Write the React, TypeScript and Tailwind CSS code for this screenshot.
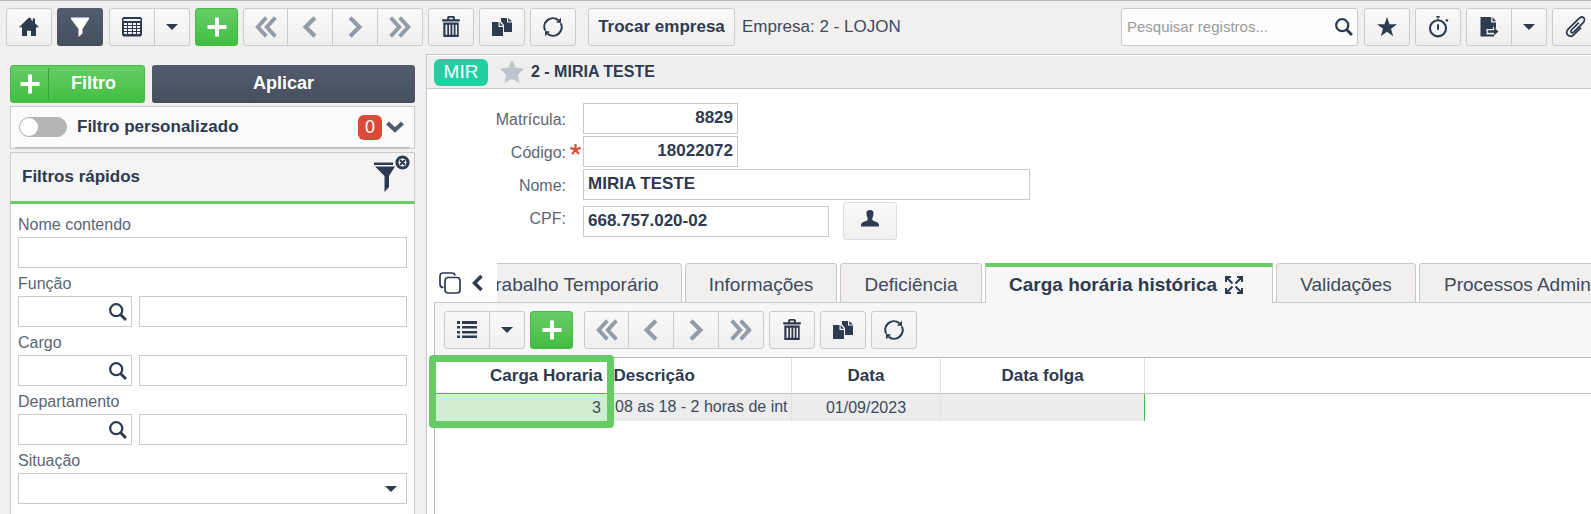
import React from "react";
import { clsx } from "clsx";

type IconProps = { className?: string };

function Icon({ size = 20, children }: { size?: number; children: React.ReactNode }) {
    return (
        <svg width={size} height={size} viewBox="0 0 20 20" fill="currentColor" className="shrink-0" aria-hidden="true">
            {children}
        </svg>
    );
}

const HomeIcon = () => (
    <Icon>
        <path d="M10 .5 0 10.2h3V19h5v-5.2h4V19h5v-8.8h3L16 6.3V1.500h-2.200v2.700L12 2.500V1h-1z" />
    </Icon>
);

const FunnelIcon = () => (
    <Icon>
        <path d="M1 .5h18v1.500L12.500 12v4.500L8.500 20v-8L1 2z" />
    </Icon>
);

const TableIcon = () => (
    <Icon>
        <path fillRule="evenodd" d="M1.500 0h17L20 1.500V18l-1.500 1.500h-17L0 18V1.500zM1.500 2v2h17V2zM2 6v2h3V6zm4 0v2h4V6zm5 0v2h3V6zm4 0v2h3V6zM2 9v2h3V9zm4 0v2h4V9zm5 0v2h3V9zm4 0v2h3V9zM2 12v2h3v-2zm4 0v2h4v-2zm5 0v2h3v-2zm4 0v2h3v-2zM2 15v2h3v-2zm4 0v2h4v-2zm5 0v2h3v-2zm4 0v2h3v-2z" />
    </Icon>
);

const ListIcon = () => (
    <Icon>
        <path d="M0 1h3v3H0zm5 0h15v3H5zM0 6h3v2.500H0zm5 0h15v2.500H5zM0 11h3v2.500H0zm5 0h15v2.500H5zM0 15.500h3V18H0zm5 0h15V18H5z" />
    </Icon>
);

const PlusIcon = () => (
    <Icon>
        <path d="M8 .5h4V8h7.500v4H12v7.500H8V12H.5V8H8z" />
    </Icon>
);

const CaretIcon = () => (
    <svg width="12" height="6" viewBox="0 0 12 6" fill="currentColor" aria-hidden="true">
        <path d="M0 0h12L6 6z" />
    </svg>
);

const FirstIcon = () => (
    <Icon size={22}>
        <path d="m10.300 1.500-7.800 8.500 7.800 8.500M18.500 1.500 10.700 10l7.800 8.500" fill="none" stroke="currentColor" strokeWidth="3.500" />
    </Icon>
);

const LastIcon = () => (
    <Icon size={22}>
        <path d="m1.500 1.500 7.800 8.500-7.800 8.500M9.700 1.500l7.800 8.500-7.800 8.500" fill="none" stroke="currentColor" strokeWidth="3.500" />
    </Icon>
);

const PrevIcon = () => (
    <Icon size={22}>
        <path d="M14.500 1.500 6 10l8.500 8.500" fill="none" stroke="currentColor" strokeWidth="3.800" />
    </Icon>
);

const NextIcon = () => (
    <Icon size={22}>
        <path d="M5.500 1.500 14 10l-8.500 8.500" fill="none" stroke="currentColor" strokeWidth="3.800" />
    </Icon>
);

const TrashIcon = () => (
    <Icon size={22}>
        <path fillRule="evenodd" d="M6.500 3V.8L7.500 0h5l1 .8V3H18v2H2V3zm1.800 0h3.400V1.700H8.300zM3 6h14v13H3zm2 2v9h1.600V8zm3.200 0v9h1.300V8zm3 0v9h1.300V8zm2.900 0v9h1.400V8z" />
    </Icon>
);

const CopyIcon = () => (
    <Icon>
        <path d="M0 5h6.500v5H11v9H0zM7.700 5 11 8.700H7.700zM9 1h6v4.500h5V15h-8V8L9 4.200zm7.200 0L20 4.500h-3.800z" />
    </Icon>
);

const RefreshIcon = () => (
    <Icon>
        <path d="M2.200 13.600A8.600 8.600 0 0 1 15.300 3.100M17.800 6.400A8.600 8.600 0 0 1 4.700 16.900" fill="none" stroke="currentColor" strokeWidth="2.100" />
        <path d="M18 .8v5.200l-5-.6zM2 19.200V14l5 .6z" />
    </Icon>
);

const SearchIcon = () => (
    <Icon size={18}>
        <circle cx="8" cy="8" r="6.700" fill="none" stroke="currentColor" strokeWidth="2.500" />
        <path d="m12.500 12.500 6.300 6.300" stroke="currentColor" strokeWidth="3.200" />
    </Icon>
);

const StarIcon = () => (
    <Icon>
        <path d="m10 0 2.500 7.200H20l-6 4.500 2.200 7.500L10 14.800l-6.200 4.400L6 11.700 0 7.200h7.500z" />
    </Icon>
);

const FavoriteIcon = () => (
    <Icon size={24}>
        <path d="m10 0 3.100 6.300 6.900 1-5 4.900 1.200 6.900-6.200-3.300-6.200 3.300L5 12.200 0 7.300l6.900-1z" />
    </Icon>
);

const StopwatchIcon = () => (
    <Icon size={22}>
        <circle cx="10" cy="11.200" r="7.300" fill="none" stroke="currentColor" strokeWidth="1.900" />
        <path d="M8.500 0h3v1.700h-3zM17 3h2.200v2H17zM9.100 7.500h1.800v5H9.100zM9.500 2h1v2h-1z" />
    </Icon>
);

const ExportIcon = () => (
    <Icon>
        <path d="M1.500 0h10.700v5.500H17v6h-2V9.700l-1-.2V12H7.500v5.500H15v2H1.500zM13.500 0 17 4.300h-3.500z" />
        <path d="M8.800 13.200H15v-2.400l4.500 3.700-4.500 3.700v-2.400H8.800z" />
    </Icon>
);

const ClipIcon = () => (
    <Icon size={22}>
        <path d="M13.500 6 7 12.500c-1.800 1.800.2 3.800 2 2l8.300-8.300C20.800 2.500 16.800-.8 13.500 2.300L4 11.800c-4 4 1.200 9.200 5 5.200l6.500-6.500" fill="none" stroke="currentColor" strokeWidth="1.600" />
    </Icon>
);

const PersonIcon = () => (
    <Icon>
        <path d="M10 1c2.800 0 3.800 1.500 3.500 4-.2 2-.8 3.200-1.200 4.200v1.600c0 1.500 6.700 1.700 6.700 5.200v1.500H1V16c0-3.500 6.700-3.700 6.700-5.200V9.200c-.4-1-1-2.200-1.200-4.200C6.200 2.500 7.200 1 10 1" />
    </Icon>
);

function ClearFilterIcon() {
    return (
        <svg width="36" height="37" viewBox="0 0 36 37" aria-hidden="true">
            <path d="M0 7.500h19v2.500H0zM1 11.500h20L15 21v11l-4.500 5V21z" fill="#2d3a4f" />
            <circle cx="28.500" cy="7.500" r="5.500" fill="#fff" stroke="#2d3a4f" strokeWidth="3.200" />
            <path d="m26 5 5 5m0-5-5 5" stroke="#2d3a4f" strokeWidth="2" />
        </svg>
    );
}

const OverlapIcon = () => (
    <svg width="22" height="22" viewBox="0 0 22 22" fill="none" stroke="currentColor" strokeWidth="1.700" aria-hidden="true">
        <rect x="6" y="5.500" width="15" height="15.500" rx="3" />
        <path d="M4.500 15.500C2 15.500 1 14.500 1 12.500V4c0-2 1-3 3-3h9c2 0 3 1 3 2.500" />
    </svg>
);

const ExpandIcon = () => (
    <svg width="18" height="18" viewBox="0 0 18 18" fill="none" stroke="currentColor" strokeWidth="2" aria-hidden="true">
        <path d="M1 6V1h5M12 1h5v5M17 12v5h-5M6 17H1v-5M1 1l6.500 6.500M17 1l-6.500 6.500M17 17l-6.500-6.500M1 17l6.500-6.500" />
    </svg>
);

const face = "flex items-center justify-center h-[38px] border border-[#cbcbcb] bg-gradient-to-b from-[#f9f9f9] to-[#efefef] text-[#2d3a4f]";

function ToolButton({ label, className = "w-[46px] rounded-[3px]", children }: { label: string; className?: string; children: React.ReactNode }) {
    return (
        <button type="button" aria-label={label} className={clsx(face, "shrink-0", className)}>
            {children}
        </button>
    );
}

function AddButton() {
    return (
        <button
            type="button"
            aria-label="Novo"
            className="flex h-[38px] w-[43px] shrink-0 items-center justify-center rounded-[3px] border border-[#45bb45] bg-gradient-to-b from-[#66cc66] to-[#40bf40] text-white"
        >
            <PlusIcon />
        </button>
    );
}

function Navigation() {
    return (
        <div className="flex shrink-0">
            <ToolButton label="Primeiro" className="w-[45px] rounded-l-[3px] text-[#939ba6]!"><FirstIcon /></ToolButton>
            <ToolButton label="Anterior" className="w-[45px] border-l-0 text-[#939ba6]!"><PrevIcon /></ToolButton>
            <ToolButton label="Próximo" className="w-[45px] border-l-0 text-[#939ba6]!"><NextIcon /></ToolButton>
            <ToolButton label="Último" className="w-[45px] rounded-r-[3px] border-l-0 text-[#939ba6]!"><LastIcon /></ToolButton>
        </div>
    );
}

function SplitButton({ label, children }: { label: string; children: React.ReactNode }) {
    return (
        <div className="flex shrink-0">
            <ToolButton label={label} className="w-[46px] rounded-l-[3px]">{children}</ToolButton>
            <ToolButton label={`${label}: opções`} className="w-[35px] rounded-r-[3px] border-l-0"><CaretIcon /></ToolButton>
        </div>
    );
}

function TopBar() {
    return (
        <header className="flex h-[54px] shrink-0 items-start overflow-hidden border-t border-[#b9b9b7] pt-[7px] pl-1.5">
            <div className="flex shrink-0 gap-[5px]">
                <ToolButton label="Início"><HomeIcon /></ToolButton>
                <button
                    type="button"
                    aria-label="Filtrar"
                    className="mr-px flex h-[38px] w-[46px] items-center justify-center rounded-[3px] bg-gradient-to-b from-[#525c6d] to-[#454f5e] text-white"
                >
                    <FunnelIcon />
                </button>
                <SplitButton label="Grade"><TableIcon /></SplitButton>
                <AddButton />
                <Navigation />
                <ToolButton label="Excluir"><TrashIcon /></ToolButton>
                <ToolButton label="Duplicar"><CopyIcon /></ToolButton>
                <ToolButton label="Atualizar"><RefreshIcon /></ToolButton>
            </div>
            <button type="button" className={clsx(face, "ml-3 w-[147px] shrink-0 rounded-[3px] text-[17px] font-bold")}>
                Trocar empresa
            </button>
            <span className="ml-[7px] flex h-[38px] shrink-0 items-center text-[17px] text-[#3d4a5e]">Empresa: 2 - LOJON</span>

            <div className="-mr-[7px] ml-auto flex shrink-0 gap-[5px]">
                <label className="flex h-[38px] w-[237px] items-center rounded-[3px] border border-[#cbcbcb] bg-[#fdfdfd] pr-1">
                    <input
                        type="text"
                        aria-label="Pesquisar registros"
                        placeholder="Pesquisar registros..."
                        className="min-w-0 flex-1 bg-transparent pl-[5px] text-[15px] outline-none placeholder:text-[#9a9a9a]"
                    />
                    <SearchIcon />
                </label>
                <ToolButton label="Favorito" className="ml-px w-[46px] rounded-[3px]"><StarIcon /></ToolButton>
                <ToolButton label="Tempo"><StopwatchIcon /></ToolButton>
                <SplitButton label="Exportar"><ExportIcon /></SplitButton>
                <ToolButton label="Anexos"><ClipIcon /></ToolButton>
            </div>
        </header>
    );
}

const box = "h-[31px] border border-[#cbcbcb] bg-white outline-none";
const fieldLabel = "flex h-7 items-center pt-1 text-base text-[#5b6675]";

function LookupField({ id, label }: { id: string; label: string }) {
    return (
        <div>
            <label htmlFor={id} className={fieldLabel}>{label}</label>
            <div className="flex gap-[7px]">
                <div className={clsx(box, "flex w-[114px] items-center pr-1")}>
                    <input id={id} type="text" className="h-full min-w-0 flex-1 px-1 outline-none" />
                    <button type="button" aria-label={`Pesquisar ${label}`}><SearchIcon /></button>
                </div>
                <input type="text" aria-label={`${label}: descrição`} className={clsx(box, "min-w-0 flex-1 px-1")} />
            </div>
        </div>
    );
}

function Sidebar() {
    return (
        <aside className="flex w-[426px] shrink-0 flex-col overflow-hidden pt-[11px] pr-[11px] pl-2.5">
            <div className="flex shrink-0 gap-[7px]">
                <button
                    type="button"
                    className="flex h-[38px] w-[135px] items-center rounded-[3px] border border-[#45bb45] bg-gradient-to-b from-[#66cc66] to-[#40bf40] text-white"
                >
                    <span className="flex h-8 w-[38px] items-center justify-center border-r border-[#37a337]"><PlusIcon /></span>
                    <span className="flex-1 pr-1.5 pb-0.5 text-lg font-bold">Filtro</span>
                </button>
                <button type="button" className="h-[38px] flex-1 rounded-[3px] bg-gradient-to-b from-[#525c6d] to-[#454f5e] pb-0.5 text-lg font-bold text-white">
                    Aplicar
                </button>
            </div>

            <section className="mt-[3px] shrink-0 border border-[#cbcbcb] bg-[#fbfbfb] px-1">
                <div className="flex h-[41px] items-center border-b border-[#bdbdbd] pr-1.5 pl-1">
                    <label className="flex items-center gap-2.5 text-[17px] font-bold">
                        <input
                            type="checkbox"
                            className="h-5 w-12 appearance-none rounded-full border border-[#b5b5b5] bg-[#b5b5b5] before:block before:size-[18px] before:rounded-full before:bg-white checked:before:ml-auto"
                        />
                        Filtro personalizado
                    </label>
                    <span className="ml-auto flex h-[25px] w-6 items-center justify-center rounded-md bg-[#d94b38] text-lg text-white">0</span>
                    <button type="button" aria-label="Expandir" className="ml-1 text-[#4f5b6c]">
                        <svg width="18" height="12" viewBox="0 0 18 12" fill="none" stroke="currentColor" strokeWidth="4" aria-hidden="true">
                            <path d="m1.500 2 7.500 7 7.500-7" />
                        </svg>
                    </button>
                </div>
            </section>

            <section className="mt-[3px] flex-1 border border-b-0 border-[#cbcbcb] bg-white">
                <header className="-mx-px flex h-[51px] items-start justify-between border-x border-b-[3px] border-x-[#cbcbcb] border-b-[#66cc66] bg-[#f4f4f4] pt-0.5 pr-1 pl-[11px]">
                    <h2 className="pt-2.5 text-[17px] leading-6 font-bold">Filtros rápidos</h2>
                    <button type="button" aria-label="Limpar filtros"><ClearFilterIcon /></button>
                </header>
                <form className="px-[7px] pt-[5px]">
                    <label htmlFor="nome-contendo" className={fieldLabel}>Nome contendo</label>
                    <input id="nome-contendo" type="text" className={clsx(box, "block w-full px-1")} />
                    <LookupField id="funcao" label="Função" />
                    <LookupField id="cargo" label="Cargo" />
                    <LookupField id="departamento" label="Departamento" />
                    <label htmlFor="situacao" className={fieldLabel}>Situação</label>
                    <div className="relative">
                        <select id="situacao" className={clsx(box, "w-full appearance-none")} />
                        <span className="pointer-events-none absolute top-1/2 right-2.5 -translate-y-1/2"><CaretIcon /></span>
                    </div>
                </form>
            </section>
        </aside>
    );
}

const labelClass = "w-[139px] shrink-0 text-right text-base text-[#5b6675]";

function RecordForm() {
    return (
        <form className="flex shrink-0 flex-col gap-0.5 pt-3.5">
            <div className="flex items-center">
                <label htmlFor="matricula" className={clsx(labelClass, "pt-0.5")}>Matrícula:</label>
                <input id="matricula" defaultValue="8829" className={clsx(box, "ml-[17px] w-[155px] px-1 pb-0.5 text-right text-[17px] font-bold")} />
            </div>
            <div className="flex items-center">
                <label htmlFor="codigo" className={clsx(labelClass, "pt-0.5")}>Código:</label>
                <span className="flex h-[31px] w-[17px] justify-center pt-2 pl-0.5" aria-hidden="true">
                    <svg width="11" height="11" viewBox="0 0 10 10" stroke="#dd4b39" strokeWidth="2">
                        <path d="M5 0v5M5 5 .3 3.500M5 5l4.700-1.500M5 5l-3 4.200M5 5l3 4.200" />
                    </svg>
                </span>
                <input id="codigo" required defaultValue="18022072" className={clsx(box, "w-[155px] px-1 pb-0.5 text-right text-[17px] font-bold")} />
            </div>
            <div className="flex items-center">
                <label htmlFor="nome" className={clsx(labelClass, "pt-0.5")}>Nome:</label>
                <input id="nome" defaultValue="MIRIA TESTE" className={clsx(box, "ml-[17px] w-[447px] px-1 pb-0.5 text-[17px] font-bold")} />
            </div>
            <div className="flex items-center">
                <label htmlFor="cpf" className={clsx(labelClass, "pb-1")}>CPF:</label>
                <input id="cpf" defaultValue="668.757.020-02" className={clsx(box, "ml-[17px] w-[246px] px-1 text-[17px] font-bold")} />
                <ToolButton label="Pessoa" className="ml-3.5 w-[54px] rounded-[3px] border-[#dcdcdc]! pb-1"><PersonIcon /></ToolButton>
            </div>
        </form>
    );
}

function Tab({ active, className, children }: IconProps & { active?: boolean; children: React.ReactNode }) {
    return (
        <button
            type="button"
            role="tab"
            aria-selected={!!active}
            className={clsx(
                "flex h-10 shrink-0 items-center gap-2 border-x text-[19px] whitespace-nowrap",
                active
                    ? "border-t-4 border-x-[#cbc7c7] border-t-[#66cc66] bg-[#f7f7f7] font-bold"
                    : "justify-center rounded-t-[3px] border-y border-[#cbc7c7] bg-[#f1f0ee] pt-1 text-[#3d4a5e]",
                className
            )}
        >
            {children}
        </button>
    );
}

function Tabs() {
    return (
        <div className="mt-[23px] ml-[7px] flex h-10 shrink-0 shadow-[inset_0_-1px_0_#cbc7c7]">
            <div className="flex w-[63px] shrink-0 gap-[11px] pt-[9px] pl-[5px]">
                <button type="button" aria-label="Abas" className="h-[22px]"><OverlapIcon /></button>
                <button type="button" aria-label="Abas anteriores" className="h-[22px]">
                    <svg width="11" height="18" viewBox="0 0 11 18" fill="none" stroke="currentColor" strokeWidth="3.500" aria-hidden="true">
                        <path d="M9.500 2 2.500 9l7 7" />
                    </svg>
                </button>
            </div>
            <div role="tablist" className="flex min-w-0 flex-1 gap-[3px] overflow-hidden">
                <Tab className="-ml-9 w-[221px]">Trabalho Temporário</Tab>
                <Tab className="w-[152px]">Informações</Tab>
                <Tab className="w-[142px]">Deficiência</Tab>
                <Tab active className="w-[288px] pl-[23px]">Carga horária histórica <ExpandIcon /></Tab>
                <Tab className="w-[140px]">Validações</Tab>
                <Tab className="px-6">Processos Administrativos</Tab>
            </div>
        </div>
    );
}

function HistoryGrid() {
    return (
        <div className="relative">
            <table className="w-full table-fixed border-collapse text-base">
                <colgroup>
                    <col className="w-[176px]" />
                    <col className="w-[180px]" />
                    <col className="w-[149px]" />
                    <col className="w-[204px]" />
                    <col />
                </colgroup>
                <thead>
                    <tr className="h-[35px] border-b border-[#c3c3c3] text-[17px]">
                        <th className="pr-[9px] text-right">Carga Horaria</th>
                        <th className="border-r border-[#e0e0e0] pl-0.5 text-left">Descrição</th>
                        <th className="border-r border-[#e0e0e0]">Data</th>
                        <th className="border-r border-[#e0e0e0]">Data folga</th>
                        <th />
                    </tr>
                </thead>
                <tbody>
                    <tr className="h-7 text-[#3d4a5e]">
                        <td className="border border-[#40bf40] bg-[#d1eed1] pt-0.5 pr-2.5 text-right">3</td>
                        <td className="overflow-hidden border-r border-[#e0e0e0] bg-[#ececec] pl-[3px] whitespace-nowrap">08 as 18 - 2 horas de int</td>
                        <td className="border-r border-[#e0e0e0] bg-[#ececec] pt-0.5 text-center">01/09/2023</td>
                        <td className="border-r border-[#40bf40] bg-[#ececec]" />
                        <td />
                    </tr>
                </tbody>
            </table>
            {/* highlight over the first column */}
            <div className="pointer-events-none absolute -top-[3px] -left-1.5 h-[73px] w-[185px] rounded-[4px] border-[7px] border-[#66cc66]" />
        </div>
    );
}

export default function App() {
    return (
        <div className="flex h-screen flex-col overflow-hidden bg-[#f1f0ee] font-['Liberation_Sans',Arial,sans-serif] text-[#2d3a4f]">
            <TopBar />
            <div className="flex min-h-0 flex-1">
                <Sidebar />
                <main className="flex min-w-0 flex-1 flex-col border-t border-l border-[#c6c6c6] bg-white">
                    <div className="flex h-[34px] shrink-0 items-center border-t border-b border-t-white border-b-[#cbcbcb] bg-[#efefef] pl-[7px]">
                        <span className="flex h-[27px] w-[54px] items-center justify-center rounded-md bg-[#21d0a2] text-[19px] text-white">MIR</span>
                        <button type="button" aria-label="Favoritar" className="ml-3 text-[#c0c3cb]"><FavoriteIcon /></button>
                        <h1 className="ml-[7px] text-base font-bold">2 - MIRIA TESTE</h1>
                    </div>
                    <RecordForm />
                    <Tabs />
                    <section className="ml-[7px] flex-1 border-l border-[#bdbdbd]">
                        <div className="flex h-[55px] items-start gap-[5px] border-b border-[#bdbdbd] bg-[#f7f7f7] pt-2 pl-[9px]">
                            <SplitButton label="Lista"><ListIcon /></SplitButton>
                            <div className="mr-1.5 flex"><AddButton /></div>
                            <Navigation />
                            <ToolButton label="Excluir"><TrashIcon /></ToolButton>
                            <ToolButton label="Duplicar"><CopyIcon /></ToolButton>
                            <ToolButton label="Atualizar"><RefreshIcon /></ToolButton>
                        </div>
                        <HistoryGrid />
                    </section>
                </main>
            </div>
        </div>
    );
}
